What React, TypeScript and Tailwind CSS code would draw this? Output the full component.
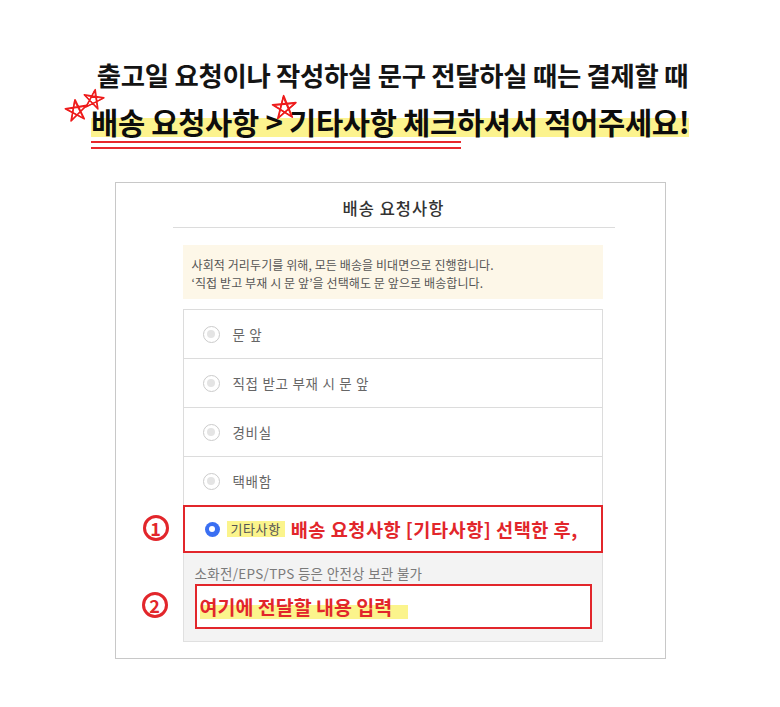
const FONT = "font-['Noto_Sans_CJK_KR','Noto_Sans',sans-serif]";

function Star({ className, rotate = 0 }: { className: string; rotate?: number }) {
  return (
    <svg viewBox="0 0 24 24" className={className} style={{ transform: `rotate(${rotate}deg)` }} fill="none">
      <path
        d="M12 1.5 L18.3 21 L1.6 8.8 L22.4 8.4 L5.4 21.2 Z"
        stroke="#ee1c1c"
        strokeWidth="1.5"
        strokeLinejoin="round"
      />
      <path
        d="M11.4 2.6 L17.6 20.2 L2.6 9.4 L21.6 9.1 L6.2 20.4 Z"
        stroke="#ee1c1c"
        strokeWidth="1"
        strokeLinejoin="round"
      />
    </svg>
  );
}

function Radio() {
  return (
    <span className="flex h-[17px] w-[17px] items-center justify-center rounded-full border border-[#cbcbcb] bg-white">
      <span className="h-[8px] w-[8px] rounded-full bg-[#e4e4e4]" />
    </span>
  );
}

function Step({ n, className }: { n: string; className: string }) {
  return (
    <span
      className={`absolute flex h-[26px] w-[26px] items-center justify-center rounded-full border-[3px] border-[#e2262b] text-[18px] leading-none font-bold text-[#e2262b] ${className}`}
    >
      {n}
    </span>
  );
}

const options = ["문 앞", "직접 받고 부재 시 문 앞", "경비실", "택배함"];

export default function App() {
  return (
    <div className={`${FONT} flex h-[707px] w-[780px] flex-col items-center bg-white`}>
      {/* headline */}
      <p className="mt-[59px] ml-[5px] text-[26.4px] leading-[32px] font-bold tracking-[-0.3px] whitespace-nowrap text-[#141414]">
        출고일 요청이나 작성하실 문구 전달하실 때는 결제할 때
      </p>
      <div className="relative mt-[13px] flex w-[598px] flex-col items-start">
        <span className="bg-[linear-gradient(to_bottom,transparent_39%,#fcf38e_39%,#fcf38e_92%,transparent_92%)] text-[29.6px] leading-[36px] font-bold tracking-[-0.3px] whitespace-nowrap text-[#0d0d0d]">
          배송 요청사항 &gt; 기타사항 체크하셔서 적어주세요!
        </span>
        <div className="mt-[1px] h-[8px] w-[370px] border-y-2 border-[#e8282c]" />
        <Star className="absolute top-[-6px] left-[-27px] h-[25px] w-[25px]" rotate={-8} />
        <Star className="absolute top-[-16px] left-[-9px] h-[23px] w-[23px]" rotate={10} />
        <Star className="absolute top-[-10px] left-[180px] h-[27px] w-[27px]" rotate={-4} />
      </div>

      {/* delivery request box */}
      <div className="mt-[33px] h-[477px] w-[551px] border border-[#c8c8c8] bg-white">
        <div className="ml-[57px] w-[442px] border-b border-[#dcdcdc] pt-[13px] pb-[7px] text-center text-[16.5px] leading-[24px] font-medium tracking-[1px] text-[#333]">
          배송 요청사항
        </div>

        <div className="mt-[17px] ml-[67px] w-[420px]">
          <div className="h-[54px] bg-[#fdf7e8] pt-[11px] pl-[9px] text-[12px] leading-[18px] tracking-[0.1px] text-[#555]">
            <p>사회적 거리두기를 위해, 모든 배송을 비대면으로 진행합니다.</p>
            <p>‘직접 받고 부재 시 문 앞’을 선택해도 문 앞으로 배송합니다.</p>
          </div>

          <div className="mt-[10px] flex flex-col">
            {options.map((o) => (
              <div
                key={o}
                className="flex h-[49px] items-center gap-[13px] border-x border-t border-[#dcdcdc] pl-[19px] text-[13.5px] tracking-[0.7px] text-[#666]"
              >
                <Radio />
                <span>{o}</span>
              </div>
            ))}

            <div className="relative flex h-[48px] items-center border-2 border-[#e2262b] pl-[20px]">
              <Step n="1" className="top-[8px] left-[-42px]" />
              <span className="flex h-[15px] w-[15px] items-center justify-center rounded-full bg-[#3a6ff2]">
                <span className="h-[6px] w-[6px] rounded-full bg-white" />
              </span>
              <span className="ml-[7px] bg-[#fbf48c] px-[4px] text-[13px] leading-[16px] tracking-[0.6px] text-[#555]">
                기타사항
              </span>
              <span className="ml-[6px] text-[18.6px] leading-[22px] font-bold tracking-[0.5px] text-[#e2262b]">
                배송 요청사항 [기타사항] 선택한 후,
              </span>
            </div>

            <div className="relative h-[89px] border-x border-b border-[#e0e0e0] bg-[#f3f3f3] pt-[11px] pl-[11px]">
              <p className="text-[13.5px] leading-[18px] tracking-[0.3px] text-[#7a7a7a]">소화전/EPS/TPS 등은 안전상 보관 불가</p>
              <Step n="2" className="top-[39px] left-[-42px]" />
              <div className="mt-[2px] flex h-[45px] w-[397px] items-center border-2 border-[#e2262b] bg-white pl-[3px]">
                <span className="bg-[linear-gradient(to_bottom,transparent_42%,#fbf48c_42%,#fbf48c_95%,transparent_95%)] pr-[16px] text-[19.5px] leading-[26px] font-bold text-[#e2262b]">
                  여기에 전달할 내용 입력
                </span>
              </div>
            </div>
          </div>
        </div>
      </div>
    </div>
  );
}
